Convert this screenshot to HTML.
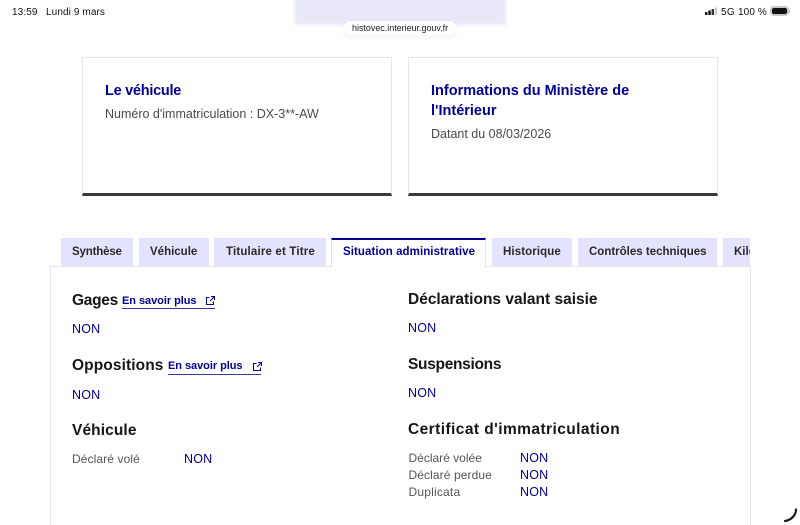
<!DOCTYPE html>
<html lang="fr">
<head>
<meta charset="utf-8">
<title>Histovec</title>
<style>
html,body{margin:0;padding:0;background:#fff}
#p{position:relative;width:800px;height:525px;overflow:hidden;background:#fff;font-family:"Liberation Sans",sans-serif;color:#161616}
#p div,#p a{position:absolute;white-space:nowrap}
.t{filter:blur(.3px)}
.card{background:#fff;border:1px solid #e5e5e5;border-bottom:3px solid #3a3a3a;box-sizing:border-box}
.ct{font-size:14.5px;font-weight:700;color:#000091;line-height:20px}
.cs{font-size:12.5px;color:#4a4a4a;line-height:18px}
.tab{background:#e3e3fd;height:28px;top:238px;box-sizing:border-box}
.tl{top:245px;font-size:11.5px;font-weight:700;color:#2a2a2a;line-height:14px}
.h{font-size:15.5px;font-weight:700;color:#161616;line-height:20px}
.n{font-size:12.5px;color:#000091;line-height:14px;letter-spacing:.2px}
.l{font-size:12px;color:#555;line-height:14px;letter-spacing:.1px}
.m{font-size:11px;font-weight:700;color:#000091;line-height:14px;letter-spacing:-.05px}
.u{height:1px;background:#3a3aa0}
.s{font-size:10px;line-height:13px;color:#111}
</style>
</head>
<body>
<div id="p">
  <div style="left:295px;top:-4px;width:211px;height:29px;background:#e9e9f9;filter:blur(1.5px)"></div>
  <div style="left:344px;top:21px;width:112px;height:14px;background:#fff;border-radius:7px;box-shadow:0 2px 8px rgba(0,0,0,.06)"></div>
  <div class="t" style="left:352px;top:22px;font-size:9px;line-height:12px;color:#222;letter-spacing:-.03px">histovec.interieur.gouv.fr</div>

  <div class="t s" style="left:12px;top:5.500px;letter-spacing:.1px">13:59</div>
  <div class="t s" style="left:46px;top:5.500px;letter-spacing:.1px">Lundi 9 mars</div>
  <svg style="position:absolute;left:704px;top:7px" width="14" height="9" viewBox="0 0 14 9">
    <rect x="1" y="5" width="2.500" height="3" fill="#111"/><rect x="4.300" y="3.500" width="2.500" height="4.500" fill="#111"/><rect x="7.600" y="2" width="2.500" height="6" fill="#333"/><rect x="11" y="0.500" width="2" height="7.500" fill="#ccc"/>
  </svg>
  <div class="t s" style="left:721px;top:5.500px;letter-spacing:.3px">5G</div>
  <div class="t s" style="left:738px;top:5.500px;letter-spacing:.1px">100 %</div>
  <div style="left:770px;top:6px;width:15px;height:6px;background:#111;border:2px solid #c8c8c8;border-radius:4px"></div>
  <div style="left:789px;top:10px;width:1px;height:3px;background:#bbb"></div>

  <div class="card" style="left:82px;top:57px;width:310px;height:139px"></div>
  <div class="t ct" style="left:105px;top:81px;letter-spacing:-.27px">Le véhicule</div>
  <div class="t cs" style="left:105px;top:105px">Numéro d'immatriculation : DX-3**-AW</div>

  <div class="card" style="left:408px;top:57px;width:310px;height:139px"></div>
  <div class="t ct" style="left:431px;top:81px">Informations du Ministère de</div>
  <div class="t ct" style="left:431px;top:101px">l'Intérieur</div>
  <div class="t cs" style="left:431px;top:125px">Datant du 08/03/2026</div>

  <div style="left:50px;top:266px;width:701px;height:259px;background:#fff;border:1px solid #e8e8e8;border-bottom:0;box-sizing:border-box"></div>

  <div class="tab" style="left:61px;width:72px"></div>
  <div class="tab" style="left:139px;width:70px"></div>
  <div class="tab" style="left:214px;width:112px"></div>
  <div style="left:331px;top:238px;width:155px;height:29px;background:#fff;border-top:2px solid #000091;border-right:1px solid #e5e5e5;border-left:1px solid #e5e5e5;box-sizing:border-box"></div>
  <div class="tab" style="left:492px;width:80px"></div>
  <div class="tab" style="left:578px;width:139px"></div>
  <div style="left:723px;top:238px;width:27px;height:28px;background:#e3e3fd;overflow:hidden"><div class="t tl" style="left:11px;top:7px">Kilométrage</div></div>

  <div class="t tl" style="left:72px;letter-spacing:-.17px">Synthèse</div>
  <div class="t tl" style="left:150px">Véhicule</div>
  <div class="t tl" style="left:226px;letter-spacing:.17px">Titulaire et Titre</div>
  <div class="t tl" style="left:343px;color:#000091;letter-spacing:.07px">Situation administrative</div>
  <div class="t tl" style="left:503px;letter-spacing:.1px">Historique</div>
  <div class="t tl" style="left:589px">Contrôles techniques</div>

  <div class="t h" style="left:72px;top:291px;letter-spacing:-.3px">Gages</div>
  <div class="t m" style="left:122px;top:294px">En savoir plus</div>
  <svg style="position:absolute;left:206px;top:296px" width="9" height="9" viewBox="0 0 9 9" fill="none" stroke="#000091" stroke-width="1"><path d="M3.500 1.500H.5V8.500H7.500V5.500"/><path d="M5 .5H8.500V4M8.500 .5L4 5"/></svg>
  <div class="u" style="left:122px;top:308px;width:93px"></div>
  <div class="t n" style="left:72px;top:322px">NON</div>

  <div class="t h" style="left:72px;top:356px;letter-spacing:.1px">Oppositions</div>
  <div class="t m" style="left:168px;top:359px">En savoir plus</div>
  <svg style="position:absolute;left:253px;top:362px" width="9" height="9" viewBox="0 0 9 9" fill="none" stroke="#000091" stroke-width="1"><path d="M3.500 1.500H.5V8.500H7.500V5.500"/><path d="M5 .5H8.500V4M8.500 .5L4 5"/></svg>
  <div class="u" style="left:168px;top:374px;width:93px"></div>
  <div class="t n" style="left:72px;top:388px">NON</div>

  <div class="t h" style="left:72px;top:421px;letter-spacing:.1px">Véhicule</div>
  <div class="t l" style="left:72px;top:452px">Déclaré volé</div>
  <div class="t n" style="left:184px;top:452px">NON</div>

  <div class="t h" style="left:408px;top:290px">Déclarations valant saisie</div>
  <div class="t n" style="left:408px;top:321px">NON</div>
  <div class="t h" style="left:408px;top:355px;letter-spacing:-.3px">Suspensions</div>
  <div class="t n" style="left:408px;top:386px">NON</div>
  <div class="t h" style="left:408px;top:420px;letter-spacing:.43px">Certificat d'immatriculation</div>
  <div class="t l" style="left:408.500px;top:451px;letter-spacing:0">Déclaré volée</div>
  <div class="t n" style="left:520px;top:451px">NON</div>
  <div class="t l" style="left:408.500px;top:468px">Déclaré perdue</div>
  <div class="t n" style="left:520px;top:468px">NON</div>
  <div class="t l" style="left:408.500px;top:485px;letter-spacing:.2px">Duplicata</div>
  <div class="t n" style="left:520px;top:485px">NON</div>

  <svg style="position:absolute;left:780px;top:505px" width="20" height="20" viewBox="0 0 20 20" fill="none"><path d="M16 4.500C16 10 11.500 15 5 16" stroke="#1a1a1a" stroke-width="2.200" stroke-linecap="round"/></svg>
</div>
</body>
</html>
